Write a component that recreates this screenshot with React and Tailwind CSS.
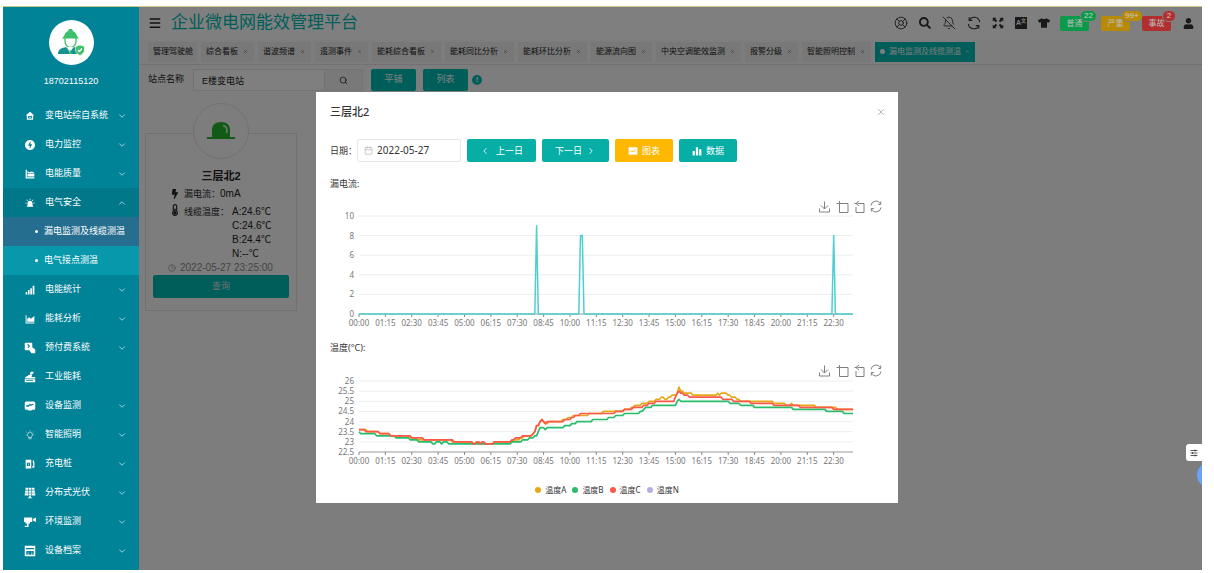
import { useState } from 'react'
import { ChevronDown, ChevronUp, ChevronLeft, ChevronRight, Search, LifeBuoy, BellOff, X, Clock, Calendar } from 'lucide-react'
import { FaSearch, FaTshirt, FaUser, FaBolt, FaThermometerHalf } from 'react-icons/fa'
import { MdOfflineBolt } from 'react-icons/md'

const ICONS = {
  home: <path d="M8 1 1 7h2v7h10V7h2zM5 8h6v4H5zm2 1v2h2V9z" fillRule="evenodd" />,
  quality: <path d="M1 1h2v12h12v2H1zM4 3l3 2 4-1 4 2v6H4zm0 4 4 1 3-1 4 1V7l-4-1-3 1-4-1z" fillRule="evenodd" />,
  siren: <path d="M4 12V8.500a4 4 0 0 1 8 0V12h1v2H3v-2zM7.400 1h1.200v2.200H7.400zM2.200 3l1-.8L4.800 4l-1 .8zM13.800 3l-1-.8L11.200 4l1 .8zM.5 7.500h2v1.200h-2zM13.500 7.500h2v1.200h-2z" />,
  stats: <path d="M1 11h2.500v4H1zM4.700 8h2.600v7H4.700zM8.500 5h2.600v10H8.500zM12.300 1H15v14h-2.700z" />,
  area: <path d="M1 2h1.500v11.500H15V15H1zM3.500 8l3-3 3 2.500L15 3v9.500H3.500z" />,
  prepay: <path d="M2 1h8a1 1 0 0 1 1 1v5l4 3v5h-5l-3-4H2a1 1 0 0 1-1-1V2a1 1 0 0 1 1-1m2 2 2 2.500L4.500 8H6l2-2.500L6 3z" fillRule="evenodd" />,
  industry: <path d="M9 1h4l-1 3H8zM2 8l7-4 2 1-1 3h5v2H1zM1 11h14v4H1zm2 1v1h9v-1z" fillRule="evenodd" />,
  device: <path d="M3 2h10a2 2 0 0 1 2 2v7a2 2 0 0 1-2 2h-2l-1 1H6l-1-1H3a2 2 0 0 1-2-2V4a2 2 0 0 1 2-2m0 7h3l2-2 1 1 4-2-1-1-3 1-1-1-3 2H3z" fillRule="evenodd" />,
  bulb: <path d="M5.500 12v-1.500a4 4 0 1 1 5 0V12zm0 2h5M8 .5v1M2 3l1 .7M14 3l-1 .7M1 8h1M14 8h1" fill="none" stroke="currentColor" strokeWidth="1" />,
  charger: <path d="M1 1h9v14H1zm2 5v5h5V6zm2 1h1v3H5zM11.500 11l1.500 1V6l-1-2 1-2h1l1 3v9h-3.500z" fillRule="evenodd" />,
  solar: <path d="M2 1h3.500v2.800H2zM6.200 1h3.600v2.800H6.200zM10.500 1H14v2.800h-3.500zM1.500 4.500h4v3h-4zM6.200 4.500h3.600v3H6.200zM10.500 4.500h4v3h-4zM1 8.200h4.500v3H1zM6.200 8.200h3.600v3H6.200zM10.500 8.200H15v3h-4.500zM7 12h2v2h2v1H5v-1h2z" />,
  camera: <path d="M0 2h11v6H8v2H6v4.500H1V13h3v-3H2V8H0zM12 4l4-2v6l-4-2z" />,
  archive: <path d="M1 1h14v14H1zm1.500 3v1.500h11V4zM3 8v5h2v-2h1v2h4v-2h1v2h2V8zm2 1h1v1H5zm5 0h1v1h-1z" fillRule="evenodd" />,
  tune: <path d="M1 3h14M1 8h14M1 13h14M10 1v4M5 6v4M10 11v4" fill="none" stroke="currentColor" strokeWidth="1.600" />,
  expand: <path d="M1 1h5L4.500 2.500 7 5 5 7 2.500 4.500 1 6zM15 1v5l-1.500-1.500L11 7 9 5l2.500-2.500L10 1zM1 15v-5l1.500 1.500L5 9l2 2-2.500 2.500L6 15zM15 15h-5l1.500-1.500L9 11l2-2 2.500 2.500L15 10z" />,
  refresh: <path d="M14.500 7A6.500 6.500 0 0 0 2.500 4.500M2.500 1.500v3.500h3.500M1.500 9a6.500 6.500 0 0 0 12 2.500M13.500 14.500V11H10" fill="none" stroke="currentColor" strokeWidth="1.200" />,
  list: <path d="M1 2.500h14M1 8h14M1 13.500h14" fill="none" stroke="currentColor" strokeWidth="2" />,
  bars: <path d="M1 8h3.500v7H1zM6.200 2h3.600v13H6.200zM11.500 5H15v10h-3.500z" />,
  chart: <path d="M1 2h14v12H1zm2 7v1.500l3-2 2.500 1L13 6.500V5L8.500 8 6 7z" fillRule="evenodd" />,
}

function Icon({ name, className = 'size-2.5' }) {
  return (
    <svg viewBox="0 0 16 16" fill="currentColor" className={`${className} shrink-0`} aria-hidden="true">
      {ICONS[name]}
    </svg>
  )
}

const MENU = [
  { label: '变电站综自系统', icon: <Icon name="home" /> },
  { label: '电力监控', icon: <MdOfflineBolt className="size-3" /> },
  { label: '电能质量', icon: <Icon name="quality" /> },
  { label: '电气安全', icon: <Icon name="siren" />, children: ['漏电监测及线缆测温', '电气接点测温'] },
  { label: '电能统计', icon: <Icon name="stats" /> },
  { label: '能耗分析', icon: <Icon name="area" /> },
  { label: '预付费系统', icon: <Icon name="prepay" className="size-3" /> },
  { label: '工业能耗', icon: <Icon name="industry" className="size-3" />, leaf: true },
  { label: '设备监测', icon: <Icon name="device" className="size-3" /> },
  { label: '智能照明', icon: <Icon name="bulb" /> },
  { label: '充电桩', icon: <Icon name="charger" /> },
  { label: '分布式光伏', icon: <Icon name="solar" className="size-3" /> },
  { label: '环境监测', icon: <Icon name="camera" className="size-3" /> },
  { label: '设备档案', icon: <Icon name="archive" className="size-3" /> },
]

const TABS = ['综合看板', '谐波频谱', '遥测事件', '能耗综合看板', '能耗同比分析', '能耗环比分析', '能源流向图', '中央空调能效监测', '报警分级', '智能照明控制']

const ALARMS = [
  { label: '普通', count: '22', color: 'bg-[#0a9a4a]' },
  { label: '严重', count: '99+', color: 'bg-[#b98a06]' },
  { label: '事故', count: '2', color: 'bg-[#b22f2f]' },
]

// one sample every five minutes, 00:00 - 23:25
const SAMPLES = 282
const LEAK = [[0, 0], [101, 9], [102, 0], [126, 8], [128, 0], [270, 8], [271, 0]]
const TEMP_A = [[0, 23.6], [5, 23.5], [12, 23.4], [18, 23.3], [29, 23.2], [33, 23.1], [53, 23], [65, 22.9], [67, 23], [69, 22.9], [77, 23], [88, 23.1], [92, 23.2], [94, 23.3], [99, 23.4], [100, 23.5], [101, 23.8], [103, 24], [104, 24.1], [105, 24], [106, 23.9], [108, 24], [116, 24.1], [119, 24.2], [122, 24.3], [131, 24.4], [139, 24.5], [151, 24.6], [155, 24.7], [157, 24.8], [161, 24.9], [165, 25], [169, 25.1], [172, 25.2], [174, 25.1], [176, 25.2], [178, 25.3], [181, 25.4], [182, 25.7], [183, 25.5], [185, 25.4], [190, 25.3], [204, 25.4], [205, 25.3], [206, 25.4], [210, 25.3], [212, 25.2], [215, 25.1], [217, 25], [236, 24.9], [243, 24.8], [246, 24.9], [247, 24.8], [260, 24.7], [272, 24.6]]
const TEMP_B = [[0, 23.5], [1, 23.4], [10, 23.3], [21, 23.2], [29, 23.1], [34, 23], [42, 22.9], [44, 23], [47, 22.9], [48, 23], [51, 22.9], [87, 23], [93, 23.1], [97, 23.2], [100, 23.3], [102, 23.5], [103, 23.7], [106, 23.6], [107, 23.7], [117, 23.8], [121, 23.9], [124, 24], [133, 24.1], [142, 24.2], [146, 24.3], [151, 24.4], [160, 24.5], [162, 24.6], [163, 24.7], [167, 24.8], [181, 25], [182, 25.1], [183, 25], [211, 24.9], [217, 24.8], [225, 24.7], [247, 24.6], [266, 24.5], [276, 24.4]]
const TEMP_C = [[0, 23.6], [4, 23.5], [12, 23.4], [18, 23.3], [30, 23.2], [37, 23.1], [54, 23], [65, 22.9], [67, 23], [69, 22.9], [70, 23], [72, 22.9], [77, 23], [87, 23.1], [89, 23.2], [93, 23.3], [99, 23.4], [100, 23.5], [101, 23.8], [103, 24], [104, 24.1], [105, 24], [106, 23.9], [107, 24], [117, 24.1], [121, 24.2], [123, 24.3], [126, 24.4], [146, 24.5], [151, 24.6], [156, 24.7], [162, 24.8], [165, 24.9], [169, 25], [180, 25.2], [181, 25.4], [182, 25.5], [183, 25.4], [185, 25.3], [188, 25.2], [207, 25.1], [213, 25], [223, 24.9], [236, 24.8], [251, 24.7], [270, 24.6]]

const LEGEND = [
  { label: '温度A', color: 'bg-[#e6a817]' },
  { label: '温度B', color: 'bg-[#27bd6c]' },
  { label: '温度C', color: 'bg-[#f9584a]' },
  { label: '温度N', color: 'bg-[#b6aedc]' },
]

const X0 = 43
const X1 = 537
const slotX = i => X0 + (i * (X1 - X0)) / (SAMPLES - 1)

function linePoints(changes, toY) {
  let k = 0
  const points = []
  for (let i = 0; i < SAMPLES; i++) {
    if (k + 1 < changes.length && changes[k + 1][0] === i) k++
    points.push(`${slotX(i).toFixed(1)},${toY(changes[k][1]).toFixed(1)}`)
  }
  return points.join(' ')
}

function timeLabel(minutes) {
  return `${String(Math.floor(minutes / 60)).padStart(2, '0')}:${String(minutes % 60).padStart(2, '0')}`
}

function Chart({ title, height, top, bottom, min, max, step, series }) {
  const toY = v => bottom - ((v - min) / (max - min)) * (bottom - top)
  const yTicks = []
  for (let v = min; v <= max; v += step) yTicks.push(v)
  const xTicks = Array.from({ length: 19 }, (_, i) => i)

  return (
    <svg viewBox={`0 0 582 ${height}`} className="block w-full" role="img" aria-label={title}>
      {yTicks.map(v => (
        <g key={v}>
          {v !== min && <line x1={X0} x2={X1} y1={toY(v)} y2={toY(v)} stroke="#eceef2" />}
          <text x={X0 - 5} y={toY(v) + 3} textAnchor="end" fontSize="8" fill="#777">{v}</text>
        </g>
      ))}
      <line x1={X0} x2={X1} y1={bottom} y2={bottom} stroke="#999" />
      {xTicks.map(i => (
        <g key={i}>
          <line x1={slotX(i * 15)} x2={slotX(i * 15)} y1={bottom} y2={bottom + 3} stroke="#888" />
          <text x={slotX(i * 15)} y={bottom + 12} textAnchor="middle" fontSize="8" fill="#777">{timeLabel(i * 75)}</text>
        </g>
      ))}
      {series.map(s => (
        <polyline key={s.color} points={linePoints(s.data, toY)} fill="none" stroke={s.color} strokeWidth={s.width} strokeLinejoin="round" />
      ))}
      {/* toolbox: save, zoom, zoom back, restore */}
      <g fill="none" stroke="#808080" strokeWidth="1">
        <path d="M508.500 9.500v7.500M505 13.500l3.500 3.500L512 13.500M503.500 16.500v3.500h10v-3.500" />
        <path d="M523.500 9v11.500h8.500v-9h-11.500" />
        <path d="M542 11.500h6v9h-8v-5.500M543 9l-3 2.500 3 2.500M538.500 11.500h3" />
        <path d="M555 13.500a5 5 0 0 1 9.500-1.500M564.700 9.500V12.500h-2.500M565 15.500a5 5 0 0 1-9.500 1.500M555.300 19.500V16.500h2.500" />
      </g>
    </svg>
  )
}

function Avatar() {
  return (
    <div className="size-[45px] rounded-full bg-white flex items-center justify-center">
      <svg viewBox="0 0 30 30" className="size-[30px]" aria-hidden="true">
        <path d="M8 8a7 7 0 0 1 4-5l1-2h3l1 2a7 7 0 0 1 4 5l2 2.500H6z" fill="#3fbf6b" />
        <path d="M9 10v3a5.500 6.500 0 0 0 11 0v-3" fill="none" stroke="#3fbf6b" strokeWidth="1.300" />
        <path d="M2 26c0-5 4-6 8-7l4 4 4-4 4 1v6z" fill="#16948f" />
        <path d="m11 19 3 6 3-6" fill="#fff" />
        <path d="m14 21-1 5h3z" fill="#3fbf6b" />
        <path d="m24 17 4.500 1.500v3.500c0 2.500-2 4.500-4.500 5.500-2.500-1-4.500-3-4.500-5.500v-3.500z" fill="#3fbf6b" stroke="#fff" strokeWidth=".6" />
        <path d="m22 22 1.500 1.500 2.500-3" fill="none" stroke="#fff" strokeWidth="1.200" />
      </svg>
    </div>
  )
}

function Sidebar() {
  return (
    <aside className="w-[136px] shrink-0 bg-[#008297] text-white">
      <div className="flex flex-col items-center pt-[13px] pb-3">
        <Avatar />
        <p className="mt-2 text-[9px] leading-4">18702115120</p>
      </div>
      <nav>
        {MENU.map(item => (
          <div key={item.label}>
            <button type="button" className={`flex w-full h-[29px] items-center pl-5 pr-3 text-[9px] ${item.children ? 'bg-[#00788a]' : ''}`}>
              <span className="w-[14px] mr-2 flex justify-center">{item.icon}</span>
              <span className="flex-1 text-left whitespace-nowrap">{item.label}</span>
              {!item.leaf && (item.children
                ? <ChevronUp className="size-2.5" strokeWidth={1.5} />
                : <ChevronDown className="size-2.5" strokeWidth={1.5} />)}
            </button>
            {item.children?.map((child, i) => (
              <a key={child} href="#" className={`flex h-[29px] items-center pl-8 text-[9px] whitespace-nowrap ${i === 0 ? 'bg-[#256e90]' : 'bg-[#0799ab]'}`}>
                <span className="size-[3px] mr-1.5 rounded-full bg-white" />
                {child}
              </a>
            ))}
          </div>
        ))}
      </nav>
    </aside>
  )
}

function Header() {
  return (
    <header className="flex h-8 items-center justify-between pl-2.5 pr-2 bg-white">
      <div className="flex items-center gap-2.5">
        <button type="button" aria-label="菜单" className="text-[#222]"><Icon name="list" className="size-3" /></button>
        <h1 className="text-[17px] leading-6 text-[#00bdb4]">企业微电网能效管理平台</h1>
      </div>
      <div className="flex items-center text-[#333]">
        <div className="flex items-center gap-[11px] mr-2.5">
          <LifeBuoy className="size-3.5" strokeWidth={1.5} />
          <FaSearch className="size-3" />
          <BellOff className="size-3.5" strokeWidth={1.5} />
          <Icon name="refresh" className="size-3.5" />
          <Icon name="expand" className="size-3" />
          <span className="flex h-3 w-3 items-center justify-center bg-[#333] text-[7px] leading-3 text-white font-bold">A<span className="text-[5px] self-start leading-[6px]">文</span></span>
          <FaTshirt className="size-3" />
        </div>
        <div className="flex gap-3">
          {ALARMS.map(a => (
            <button key={a.label} type="button" className={`relative z-20 h-[15px] w-[29px] rounded-[2px] text-[8px] leading-[15px] text-[#bbb] ${a.color}`}>
              {a.label}
              <span className={`absolute -top-1.5 left-5 h-3 min-w-3.5 px-[3px] rounded-full border border-[#7f7f7f] text-[8px] leading-[10px] text-[#ccc] ${a.color}`}>{a.count}</span>
            </button>
          ))}
        </div>
        <FaUser className="size-[11px] ml-3" />
      </div>
    </header>
  )
}

function TabBar() {
  return (
    <nav className="flex h-[26px] items-center gap-1 pl-[9px] border-b border-[#e2e2e2] text-[8px] text-[#222] whitespace-nowrap">
      <a href="#" className="flex h-5 items-center pl-[5px] pr-1 bg-[#f0f0f0]">管理驾驶舱</a>
      {TABS.map(t => (
        <a key={t} href="#" className="flex h-5 items-center gap-[5px] pl-[5px] pr-1.5 bg-[#f0f0f0]">
          {t}<X className="size-[5px] text-[#555]" />
        </a>
      ))}
      <a href="#" className="flex h-5 items-center gap-1 px-[5px] bg-[#00bdb4] text-[#f4f4f4]">
        <span className="size-[5px] rounded-full bg-white" />
        漏电监测及线缆测温<X className="size-[5px]" />
      </a>
    </nav>
  )
}

function FilterBar() {
  return (
    <form className="flex items-center pl-[9px] pt-1 text-[9px] text-[#222]" onSubmit={e => e.preventDefault()}>
      <label htmlFor="station" className="mr-[9px]">站点名称</label>
      <input id="station" defaultValue="E楼变电站" className="h-[22px] w-[132px] px-2 bg-white border border-[#e6e6e6] outline-none" />
      <button type="button" aria-label="搜索" className="flex h-[22px] w-[38px] items-center justify-center bg-[#f3f3f3] border border-l-0 border-[#e6e6e6]">
        <Search className="size-[9px]" />
      </button>
      <button type="button" className="ml-2 h-[22px] w-[45px] rounded-[2px] bg-[#00bdb4] text-white">平铺</button>
      <button type="button" className="ml-[7px] h-[22px] w-[45px] rounded-[2px] bg-[#00bdb4] text-white">列表</button>
      <span className="ml-1 flex size-2.5 items-center justify-center rounded-full bg-[#00bdb4] text-[8px] leading-none font-bold text-white">!</span>
    </form>
  )
}

function DeviceCard() {
  return (
    <section className="ml-1.5 mt-3 w-[152px]">
      <div className="relative mx-auto -mb-[26px] flex size-14 items-center justify-center rounded-full border border-[#e2e2e2] bg-[#fafafa]">
        <svg viewBox="0 0 28 20" className="w-[28px]" aria-hidden="true">
          <path d="M0 16h28v2H0zM5 16V9c0-5 3-8 9-8s9 3 9 8v7z" fill="#28b52e" />
          <path d="M16 4c3 .3 4.500 2 4.500 4.500V12H19V9c0-2-.8-3-3-3.500z" fill="#d8f5dd" />
        </svg>
      </div>
      <div className="border border-[#e2e2e2] px-[7px] pt-8 pb-3 text-[10px] text-[#222]">
        <h2 className="text-center text-[11px] leading-5 font-bold">三层北2</h2>
        <p className="flex items-center gap-1 pl-[17px] text-[9px] leading-4"><FaBolt className="size-2.5" /><span>漏电流：<span className="text-[10px]">0mA</span></span></p>
        <div className="flex gap-[3px] pl-4">
          <FaThermometerHalf className="size-3 mt-0.5" />
          <span className="text-[9px] leading-[20px]">线缆温度：</span>
          <ul className="pt-[3px] text-[10px] leading-[14px]">
            <li>A:24.6℃</li>
            <li>C:24.6℃</li>
            <li>B:24.4℃</li>
            <li>N:--℃</li>
          </ul>
        </div>
        <p className="flex items-center gap-1 pl-[15px] leading-[14px] text-[#8a8a8a] whitespace-nowrap"><Clock className="size-2" />2022-05-27 23:25:00</p>
        <button type="button" className="h-[23px] w-full rounded-[2px] bg-[#00bdb4] text-[9px] text-[#ddd]">查询</button>
      </div>
    </section>
  )
}

function DetailDialog({ onClose }) {
  const [date, setDate] = useState('2022-05-27')

  return (
    <div role="dialog" aria-label="三层北2" className="w-full max-w-[582px] bg-white text-[#333] font-['Noto_Sans','Noto_Sans_CJK_SC',sans-serif]">
      <div className="flex h-10 items-center justify-between pl-3.5 pr-3">
        <h2 className="text-[11px] font-medium">三层北2</h2>
        <button type="button" aria-label="关闭" onClick={onClose}><X className="size-2.5 text-[#888]" strokeWidth={1.5} /></button>
      </div>

      <div className="flex items-center gap-1.5 px-3.5 pt-[7px] text-[9px]">
        <label htmlFor="day">日期：</label>
        <div className="flex h-[23px] w-[104px] -ml-1.5 items-center gap-1 rounded-[2px] border border-[#e6e6e6] px-1.5">
          <Calendar className="size-[9px] shrink-0 text-[#bbb]" />
          <input id="day" value={date} onChange={e => setDate(e.target.value)} className="w-full text-[10px] outline-none" />
        </div>
        <button type="button" className="flex h-[23px] w-[69px] items-center justify-center gap-1.5 rounded-[2px] bg-[#06aea6] text-white"><ChevronLeft className="size-2.5" />上一日</button>
        <button type="button" className="flex h-[23px] w-[67px] items-center justify-center gap-1 rounded-[2px] bg-[#06aea6] text-white">下一日<ChevronRight className="size-2.5" /></button>
        <button type="button" className="flex h-[23px] w-[58px] items-center justify-center gap-1 rounded-[2px] bg-[#ffb800] text-white"><Icon name="chart" />图表</button>
        <button type="button" className="flex h-[23px] w-[58px] items-center justify-center gap-1 rounded-[2px] bg-[#06aea6] text-white"><Icon name="bars" />数据</button>
      </div>

      <h3 className="px-3.5 pt-3.5 text-[9px] leading-4">漏电流:</h3>
      <Chart title="漏电流" height={148} top={24} bottom={122} min={0} max={10} step={2}
        series={[{ color: '#4fcfcf', width: 1.5, data: LEAK }]} />

      <h3 className="px-3.5 text-[9px] leading-4">温度(°C):</h3>
      <Chart title="温度" height={116} top={25} bottom={96} min={22.5} max={26} step={0.5}
        series={[
          { color: '#e6a817', width: 1.7, data: TEMP_A },
          { color: '#27bd6c', width: 1.7, data: TEMP_B },
          { color: '#f9584a', width: 1.7, data: TEMP_C },
        ]} />
      <ul className="flex justify-center gap-1.5 pt-[11px] pb-[7px] text-[8px] leading-[13px]">
        {LEGEND.map(l => (
          <li key={l.label} className="flex items-center gap-1">
            <span className={`size-1.5 rounded-full ${l.color}`} />{l.label}
          </li>
        ))}
      </ul>
    </div>
  )
}

export default function App() {
  const [open, setOpen] = useState(true)

  return (
    <div className="flex h-screen flex-col bg-white pt-1.5 pl-[3px] pr-3 pb-[3px] font-['Liberation_Sans','Noto_Sans_CJK_SC',sans-serif]">
      <div className="flex min-h-0 flex-1 border-t border-[#c9c98c]">
        <Sidebar />
        <main className="relative min-w-0 flex-1 overflow-hidden bg-[#fafafa]">
          <Header />
          <TabBar />
          <FilterBar />
          <DeviceCard />
          {open && <div className="absolute inset-0 z-10 bg-black/50" />}
          <button type="button" aria-label="设置" className="absolute right-0 top-[437px] z-20 flex h-[17px] w-4 items-center justify-center rounded-l-[3px] bg-white text-[#333]">
            <Icon name="tune" className="size-2" />
          </button>
          <span className="absolute -right-[19px] top-[456px] z-20 size-6 rounded-full bg-[#6ba3fb]" />
        </main>
      </div>
      {open && (
        <div className="fixed inset-0 z-30 flex items-start justify-center pt-[92px]">
          <DetailDialog onClose={() => setOpen(false)} />
        </div>
      )}
    </div>
  )
}
